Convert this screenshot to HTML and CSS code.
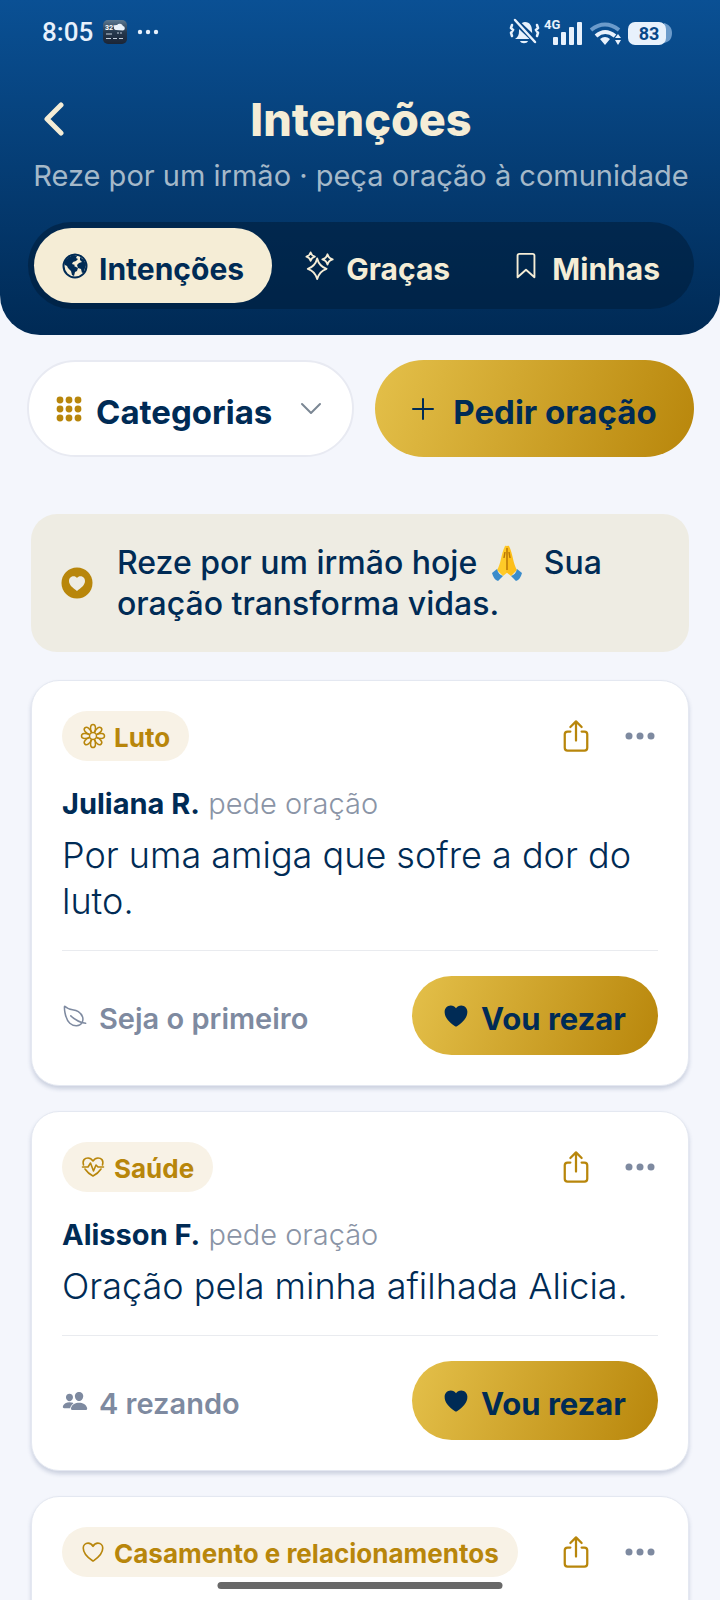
FILE: index.html
```
<!DOCTYPE html>
<html lang="pt-BR">
<head>
<meta charset="utf-8">
<meta name="viewport" content="width=device-width, initial-scale=1">
<title>Intenções</title>
<link rel="stylesheet" href="styles.css">
</head>
<body>

<!-- shared icons -->
<svg class="sprite" aria-hidden="true">
	<symbol id="share" viewBox="0 0 512 512"><path fill="none" stroke="currentColor" stroke-width="32" stroke-linecap="round" stroke-linejoin="round" d="M336 192h40a40 40 0 0140 40v192a40 40 0 01-40 40H136a40 40 0 01-40-40V232a40 40 0 0140-40h40M336 128l-80-80-80 80M256 321V48"/></symbol>
	<symbol id="dots" viewBox="0 0 36 36"><circle cx="7" cy="18" r="3.5"/><circle cx="18" cy="18" r="3.5"/><circle cx="29" cy="18" r="3.5"/></symbol>
	<symbol id="heart" viewBox="0 0 512 512"><path d="M256 448a32 32 0 01-18-5.570c-78.590-53.350-112.620-89.930-131.390-112.800-40-48.750-59.150-98.800-58.610-153C48.630 114.520 98.460 64 159.080 64c44.080 0 74.610 24.830 92.390 45.510a6 6 0 009.060 0C278.310 88.810 308.840 64 352.920 64c60.620 0 110.450 50.520 111.080 112.640.54 54.210-18.630 104.260-58.610 153-18.770 22.870-52.800 59.450-131.390 112.800A32 32 0 01256 448z"/></symbol>
	<symbol id="heart-outline" viewBox="0 0 512 512"><path fill="none" stroke="currentColor" stroke-width="32" stroke-linejoin="round" d="M352.920 80C288 80 256 144 256 144s-32-64-96.920-64c-52.760 0-94.540 44.140-95.080 96.810-1.100 109.330 86.730 187.080 183 252.420a16 16 0 0018 0c96.260-65.340 184.090-143.090 183-252.420-.54-52.670-42.320-96.810-95.080-96.810z"/></symbol>
</svg>

<div class="screen">
	<header class="header">
		<div class="status">
			<span class="clock">8:05</span>
			<svg class="weather" viewBox="0 0 24 24">
				<defs><linearGradient id="night" x1="0" y1="0" x2="0" y2="1"><stop offset="0" stop-color="#5c7890"/><stop offset=".5" stop-color="#26384d"/><stop offset="1" stop-color="#1b2536"/></linearGradient></defs>
				<rect width="24" height="24" rx="5" fill="url(#night)"/>
				<path fill="#e9f2fa" d="M13 10a2.500 2.500 0 011-5 3.500 3.500 0 016 1 2.300 2.300 0 010 4.500z"/>
				<path stroke="#c3cedb" stroke-width="1" d="M3 14h6M3 18.500h5M10 18.500h4M16 18.500h4M14 13h2M18 12v2"/>
				<text x="2" y="10" font-size="7" font-weight="700" fill="#fff">32°</text>
			</svg>
			<svg class="more" viewBox="0 0 22 24"><circle cx="3" cy="12" r="2.200"/><circle cx="11" cy="12" r="2.200"/><circle cx="19" cy="12" r="2.200"/></svg>
			<svg class="signals" viewBox="0 0 164 32">
				<!-- muted bell -->
				<path d="M6 23c3-2 4-4 4-8 0-5 2-9 6-9 5 0 7 4 7 9 0 4 1 6 4 8zM11 25h8c-1 3-7 3-8 0z"/>
				<path stroke="#084788" stroke-width="6" d="M5 4l22 21"/>
				<path fill="none" stroke="#e8f1fc" stroke-width="2.500" stroke-linecap="round" d="M6 4l20 22M3 9l-1 3 2 2-2 3 1 3M28 9l1 3-2 2 2 3-1 3"/>
				<text x="35" y="13" font-size="13" font-weight="700">4G</text>
				<rect x="44" y="21" width="5" height="8" rx="1"/><rect x="52" y="16" width="5" height="13" rx="1"/><rect x="60" y="11" width="5" height="18" rx="1"/><rect x="68" y="6" width="5" height="23" rx="1"/>
				<!-- wifi -->
				<path fill="none" stroke="#6c9bcb" stroke-width="4" d="M82 14q14-11 28 0"/>
				<path fill="none" stroke="#e8f1fc" stroke-width="4" d="M87 20q9-8 19 0"/>
				<path d="M91 23q5-4 10 0l-5 6zM106 22l3-4 3 4zM106 24h6l-3 5z"/>
				<!-- battery -->
				<path fill="#6c9bcb" d="M155 7c4 1 8 4 8 10s-3 9-8 10z"/>
				<rect x="119" y="6" width="38" height="23" rx="7"/>
				<text class="level" x="140" y="24" font-size="18" font-weight="700" text-anchor="middle">83</text>
			</svg>
		</div>

		<div class="titlebar">
			<button class="back" aria-label="Voltar"><svg viewBox="0 0 24 36"><path d="M19 3L5 17l14 14"/></svg></button>
			<h1>Intenções</h1>
		</div>
		<p class="subtitle">Reze por um irmão · peça oração à comunidade</p>

		<nav class="tabs">
			<button class="tab active">
				<svg viewBox="0 0 26 26">
					<circle cx="13" cy="13" r="11.500" fill="none" stroke="currentColor" stroke-width="2"/>
					<path fill="currentColor" d="M3 8c2-3 5-5 9-6l3 1-1 2 2 1-2 2-3 1-1 2 3 1-1 1 4 2-1 3-2 1-1 4-2-1-1-4-3-3-1-2-2-1zM18 4l4 3 2 5-1 3-1 4-2 1-1-4-3-1-1-3 2-2 3-1-2-2z"/>
				</svg>
				<span>Intenções</span>
			</button>
			<button class="tab">
				<svg class="wide" viewBox="0 0 32 32"><path fill="none" stroke="currentColor" stroke-width="2" stroke-linejoin="round" d="M13 8c1.500 6 4 9 10 11-6 2-8.500 5-10 11-1.500-6-4-9-10-11 6-2 8.500-5 10-11zM6 1.500c.7 2.500 1.800 3.800 4.500 4.500-2.700.7-3.800 2-4.500 4.500C5.300 8 4.200 6.700 1.500 6 4.200 5.300 5.300 4 6 1.500zM24 3.500c.8 3 2.200 4.600 5.500 5.500-3.300.9-4.700 2.500-5.500 5.500-.8-3-2.200-4.600-5.500-5.500 3.300-.9 4.700-2.500 5.500-5.500z"/></svg>
				<span>Graças</span>
			</button>
			<button class="tab">
				<svg class="wide" viewBox="0 0 512 512"><path fill="none" stroke="currentColor" stroke-width="32" stroke-linecap="round" stroke-linejoin="round" d="M368 48H144a32 32 0 00-32 32v368l144-128 144 128V80a32 32 0 00-32-32z"/></svg>
				<span>Minhas</span>
			</button>
		</nav>
	</header>

	<div class="actions">
		<button class="categories">
			<svg class="grid" viewBox="0 0 26 26">
				<circle cx="4" cy="4" r="3.400"/><circle cx="13" cy="4" r="3.400"/><circle cx="22" cy="4" r="3.400"/>
				<circle cx="4" cy="13" r="3.400"/><circle cx="13" cy="13" r="3.400"/><circle cx="22" cy="13" r="3.400"/>
				<circle cx="4" cy="22" r="3.400"/><circle cx="13" cy="22" r="3.400"/><circle cx="22" cy="22" r="3.400"/>
			</svg>
			<span>Categorias</span>
			<svg class="chevron" viewBox="0 0 22 22"><path d="M2 6l9 9 9-9"/></svg>
		</button>
		<button class="ask gold">
			<svg viewBox="0 0 22 22"><path stroke="currentColor" stroke-width="2" stroke-linecap="round" d="M11 1v20M1 11h20"/></svg>
			<span>Pedir oração</span>
		</button>
	</div>

	<main class="feed">
		<div class="banner">
			<svg class="badge-heart" viewBox="0 0 32 32"><circle cx="16" cy="16" r="15.500" fill="#b8860b"/><path fill="#eeece3" d="M16 24c-4-3-8-6-8-10 0-5 6-6 8-3 2-3 8-2 8 3 0 4-4 7-8 10z"/></svg>
			<p>Reze por um irmão hoje
				<svg class="pray" viewBox="0 0 32 36" role="img" aria-label="mãos em oração">
					<path fill="#ffca28" d="M14 1c2-1 3 1 3 3v23l-5 4-6-6c4-6 4-16 8-24z"/>
					<path fill="#fdbf1a" d="M18 1c-2-1-3 1-3 3v23l5 4 6-6c-4-6-4-16-8-24z"/>
					<path fill="none" stroke="#b97809" stroke-width="1.500" d="M16 3v22M13 13l1-6M19 13l-1-6"/>
					<path fill="#3b8ccb" d="M1 28l5-4c1 4 3 6 6 7l-5 5c-3-1-5-4-6-8zM31 28l-5-4c-1 4-3 6-6 7l5 5c3-1 5-4 6-8z"/>
				</svg>
				&nbsp;Sua oração transforma vidas.</p>
		</div>

		<article class="card">
			<div class="card-top">
				<span class="tag">
					<svg viewBox="0 0 26 26"><g fill="none" stroke="currentColor" stroke-width="1.500">
						<circle cx="13" cy="13" r="3.500"/>
						<path id="petal" d="M11.500 9.500C10 6 10 1.500 13 1.500S16 6 14.500 9.500"/>
						<use href="#petal" transform="rotate(45 13 13)"/><use href="#petal" transform="rotate(90 13 13)"/><use href="#petal" transform="rotate(135 13 13)"/><use href="#petal" transform="rotate(180 13 13)"/><use href="#petal" transform="rotate(225 13 13)"/><use href="#petal" transform="rotate(270 13 13)"/><use href="#petal" transform="rotate(315 13 13)"/>
					</g></svg>
					<span>Luto</span>
				</span>
				<button class="icon-btn share" aria-label="Compartilhar"><svg><use href="#share"/></svg></button>
				<button class="icon-btn" aria-label="Mais opções"><svg><use href="#dots"/></svg></button>
			</div>
			<p class="author"><strong>Juliana R.</strong> pede oração</p>
			<p class="text">Por uma amiga que sofre a dor do luto.</p>
			<div class="card-foot">
				<span class="count">
					<svg viewBox="0 0 512 512"><path fill="none" stroke="currentColor" stroke-width="30" stroke-linecap="round" stroke-linejoin="round" d="M321.890 171.420C233 114 141 155.220 56 65.220c-19.800-21-8.300 235.500 98.100 332.700 77.790 71 197.900 63.080 238.400-5.920s18.280-163.170-70.610-220.580zM173 253c86 81 175 129 292 147"/></svg>
					<span>Seja o primeiro</span>
				</span>
				<button class="pray-btn gold"><svg><use href="#heart"/></svg><span>Vou rezar</span></button>
			</div>
		</article>

		<article class="card">
			<div class="card-top">
				<span class="tag">
					<svg viewBox="0 0 26 26"><path fill="none" stroke="currentColor" stroke-width="1.600" stroke-linecap="round" stroke-linejoin="round" d="M3.500 11C2 6 5 4 8 4c2.500 0 4 1.500 5 3 1-1.500 2.500-3 5-3 3 0 6 2 4.500 7M5 15c2 3 5 5.500 8 7 3-1.500 6-4 8-7M2.500 13H8l2.500-4 3 8 2.500-6 2 2h5.500"/></svg>
					<span>Saúde</span>
				</span>
				<button class="icon-btn share" aria-label="Compartilhar"><svg><use href="#share"/></svg></button>
				<button class="icon-btn" aria-label="Mais opções"><svg><use href="#dots"/></svg></button>
			</div>
			<p class="author"><strong>Alisson F.</strong> pede oração</p>
			<p class="text">Oração pela minha afilhada Alicia.</p>
			<div class="card-foot">
				<span class="count">
					<svg viewBox="0 0 512 512"><path fill="currentColor" d="M336 256c-20.560 0-40.440-9.180-56-25.840-15.130-16.250-24.370-37.920-26-61-1.740-24.620 5.770-47.260 21.140-63.760S312 80 336 80c23.830 0 45.380 9.060 60.700 25.520 15.470 16.620 23 39.220 21.260 63.630-1.670 23.110-10.900 44.770-26 61C376.440 246.820 356.570 256 336 256zM467.830 432H204.180a27.710 27.710 0 01-22-10.670 30.220 30.220 0 01-5.260-25.790c8.420-33.810 29.280-61.850 60.320-81.080C264.790 297.400 299.860 288 336 288c36.850 0 71 9 98.710 26.050 31.110 19.130 52 47.330 60.380 81.550a30.270 30.270 0 01-5.320 25.780A27.680 27.680 0 01467.830 432zM147 260c-35.190 0-66.130-32.720-69-72.930-1.420-20.600 5-39.650 18-53.620 12.860-13.830 31-21.450 51-21.450s38 7.660 50.930 21.570c13.100 14.080 19.500 33.090 18 53.520-2.870 40.200-33.800 72.910-68.930 72.910zM212.660 291.450c-17.590-8.600-40.420-12.900-65.650-12.900-29.460 0-58.070 7.680-80.570 21.620-25.510 15.830-42.670 38.880-49.600 66.710a27.390 27.390 0 004.790 23.360A25.320 25.320 0 0041.720 400h111a8 8 0 007.870-6.570c.11-.63.25-1.260.41-1.880 8.480-34.060 28.350-62.840 57.710-83.820a8 8 0 00-.63-13.390c-1.570-.92-3.370-1.890-5.420-2.890z"/></svg>
					<span>4 rezando</span>
				</span>
				<button class="pray-btn gold"><svg><use href="#heart"/></svg><span>Vou rezar</span></button>
			</div>
		</article>

		<article class="card">
			<div class="card-top">
				<span class="tag">
					<svg><use href="#heart-outline"/></svg>
					<span>Casamento e relacionamentos</span>
				</span>
				<button class="icon-btn share" aria-label="Compartilhar"><svg><use href="#share"/></svg></button>
				<button class="icon-btn" aria-label="Mais opções"><svg><use href="#dots"/></svg></button>
			</div>
		</article>
	</main>
</div>
<div class="home-bar"></div>

</body>
</html>
```
FILE: styles.css
```
*,:after,:before{box-sizing:border-box}
body{
	margin:0;
	color:#002b55;
	background:#f4f6fc;
	font:400 30px/40px Inter,"Open Sans",sans-serif;
}
h1,p{margin:0}
button{
	margin:0;
	padding:0;
	border:none;
	color:inherit;
	background:none;
	font:inherit;
	cursor:pointer;
}
svg{
	display:block;
	flex:none;
	fill:currentColor;
}
.sprite{
	position:absolute;
	width:0;
	height:0;
}
.screen{
	display:flex;
	flex-direction:column;
	height:100vh;
	overflow:hidden;
}

/* header */
.header{
	flex:none;
	padding:0 26px 26px 28px;
	border-radius:0 0 40px 40px;
	background:linear-gradient(#0a5094,#002a55);
}
.status{
	display:flex;
	align-items:center;
	height:64px;
	padding:0 21px 0 14px;
	color:#e8f1fc;
	font-family:Roboto,sans-serif;
}
.clock{
	margin-right:10px;
	font-size:26px;
	font-weight:500;
}
.weather{
	width:24px;
	height:24px;
	margin-right:10px;
}
.more{
	width:22px;
	height:24px;
}
.signals{
	width:164px;
	height:32px;
	margin-left:auto;
}
.signals .level{
	fill:#084788;
}
.titlebar{
	display:grid;
	grid-template-columns:48px 1fr 48px;
	align-items:center;
	height:60px;
	margin-top:26px;
	color:#f5edd6;
}
.titlebar h1{
	font-size:45px;
	font-weight:800;
	line-height:60px;
	text-align:center;
}
.back svg{
	width:24px;
	height:36px;
	margin-left:14px;
	fill:none;
	stroke:currentColor;
	stroke-width:5;
	stroke-linecap:round;
	stroke-linejoin:round;
}
.subtitle{
	margin:6px 0 0;
	color:#a5b9c9;
	font-size:29px;
	text-align:center;
}
.tabs{
	display:flex;
	justify-content:space-between;
	margin-top:26px;
	padding:6px;
	border-radius:44px;
	background:rgba(0,30,60,.6);
}
.tab{
	display:flex;
	align-items:center;
	gap:11px;
	height:75px;
	padding:0 28px;
	border-radius:38px;
	color:#f5edd6;
	font-weight:700;
}
.tab.active{
	color:#002b55;
	background:#f5edd6;
}
.tab svg{
	width:26px;
	height:26px;
}
.tab .wide{
	width:30px;
	height:30px;
}
.tab span,
.actions span,
.card-foot span span,
.pray-btn span{
	padding-top:6px;
}

/* filter and ask buttons */
.actions{
	display:grid;
	flex:none;
	grid-template-columns:41fr 40fr;
	gap:21px;
	padding:25px 26px 0 27px;
	font-size:33px;
	font-weight:700;
}
.actions button{
	display:flex;
	align-items:center;
	height:97px;
	border-radius:49px;
}
.categories{
	padding:0 30px 0 27px;
	border:2px solid #e8eaf2;
	background:#fff;
}
.grid{
	width:26px;
	height:26px;
	margin-right:14px;
	fill:#b8860b;
}
.chevron{
	width:22px;
	height:22px;
	margin-left:auto;
	fill:none;
	stroke:#7b8794;
	stroke-width:2;
	stroke-linecap:round;
	stroke-linejoin:round;
}
.gold{
	background:linear-gradient(110deg,#e4c04a,#b8860b);
}
.ask{
	justify-content:center;
	gap:19px;
}
.ask svg{
	width:22px;
	height:22px;
}

/* feed */
.feed{
	display:flex;
	flex:1;
	flex-direction:column;
	gap:25px;
	min-height:0;
	padding:57px 31px 0;
	overflow:hidden;
}
.banner{
	display:flex;
	flex:none;
	align-items:center;
	gap:24px;
	margin-bottom:3px;
	padding:28px 30px;
	border-radius:26px;
	background:#eeece3;
	font-size:32px;
	font-weight:500;
	line-height:41px;
}
.badge-heart{
	width:32px;
	height:32px;
}
.pray{
	display:inline-block;
	width:32px;
	height:36px;
	margin:0 4px 0 5px;
	vertical-align:-7px;
}
.card{
	flex:none;
	padding:30px;
	border:1px solid #e4e8f1;
	border-radius:28px;
	background:#fff;
	box-shadow:0 3px 4px rgba(40,60,110,.2);
}
.card:last-child{
	min-height:360px;
}
.card-top{
	display:flex;
	align-items:center;
	gap:28px;
	height:50px;
}
.tag{
	display:flex;
	align-items:center;
	gap:8px;
	height:50px;
	margin-right:auto;
	padding:0 19px 0 18px;
	border-radius:25px;
	color:#b8860b;
	background:#f8f2e6;
	font-size:26px;
	font-weight:700;
	white-space:nowrap;
}
.tag span{
	padding-top:4px;
}
.tag svg,
.count svg{
	width:26px;
	height:26px;
}
.icon-btn{
	color:#7e8aa0;
}
.icon-btn svg{
	width:36px;
	height:36px;
}
.share{
	color:#b8860b;
}
.author{
	margin-top:23px;
	color:#8a94a6;
	font-size:29px;
	font-weight:300;
}
.author strong{
	color:#002b55;
	font-weight:700;
}
.text{
	margin-top:8px;
	font-size:36px;
	font-weight:300;
	line-height:46px;
}
.card-foot{
	display:flex;
	align-items:center;
	justify-content:space-between;
	margin-top:26px;
	padding-top:25px;
	border-top:1px solid #e9ebef;
}
.count{
	display:flex;
	align-items:center;
	gap:11px;
	color:#7e8aa0;
	font-size:29px;
	font-weight:600;
}
.pray-btn{
	display:flex;
	align-items:center;
	gap:11px;
	height:79px;
	padding:0 32px 0 30px;
	border-radius:40px;
	font-size:31px;
	font-weight:700;
}
.pray-btn svg{
	width:28px;
	height:28px;
}

/* system gesture bar, over the feed */
.home-bar{
	position:fixed;
	bottom:11px;
	left:50%;
	width:285px;
	height:7px;
	border-radius:4px;
	background:#686868;
	transform:translateX(-50%);
}
```
